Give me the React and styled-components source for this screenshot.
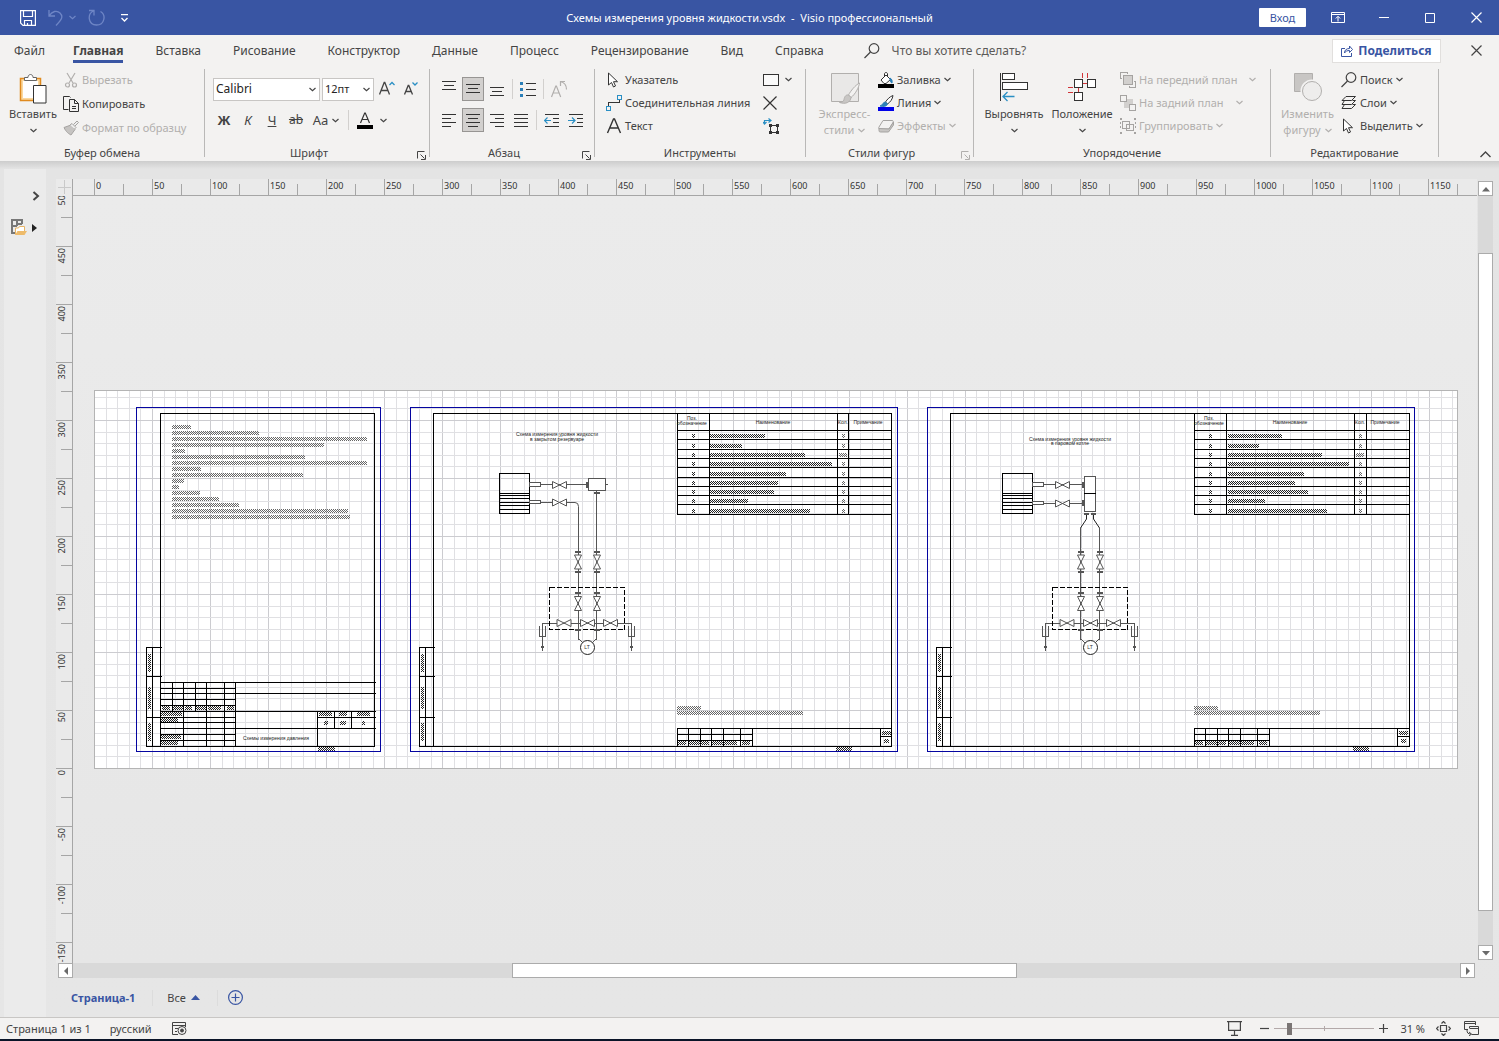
import React from "react";
import styled, { createGlobalStyle, css } from "styled-components";

const BLUE = "#3955a3";
const INK = "#444444";
const MUTED = "#b1afad";
const FONT = '"Noto Sans", "Open Sans", sans-serif';

const Global = createGlobalStyle`
  *, *::before, *::after { box-sizing: border-box; }
  body { margin: 0; background: #e6e6e6; }
  button, input, select { font: inherit; color: inherit; }
  button { background: none; border: 0; padding: 0; margin: 0; }
  svg { display: block; flex: none; }
`;

/* ---------- shell ---------- */

const Shell = styled.div`
  display: flex;
  flex-direction: column;
  height: 100vh;
  min-height: 600px;
  overflow: hidden;
  font: 11px/16px ${FONT};
  color: ${INK};
`;

const TitleBar = styled.header`
  display: grid;
  grid-template-columns: 1fr auto 1fr;
  align-items: center;
  flex: none;
  height: 35px;
  background: ${BLUE};
  color: #fff;
`;

const QuickAccess = styled.div`
  display: flex;
  align-items: center;
  gap: 12px;
  padding-left: 20px;
`;

const QuickButton = styled.button`
  display: flex;
  align-items: center;
  gap: 6px;
  margin-right: ${(p) => p.$after || 0}px;
  color: ${(p) => (p.$faded ? "#6f86c6" : "#fff")};
`;

const DocTitle = styled.h1`
  margin: 0;
  font: 11px/16px ${FONT};
  white-space: pre;
`;

const WindowControls = styled.div`
  display: flex;
  align-items: center;
  justify-content: flex-end;
  align-self: stretch;
`;

const SignIn = styled.button`
  width: 47px;
  height: 19px;
  margin-right: 9px;
  border-radius: 1px;
  background: #fff;
  color: ${BLUE};
`;

const WindowButton = styled.button`
  display: flex;
  align-items: center;
  justify-content: center;
  width: 46px;
  height: 34px;
`;

/* ---------- ribbon ---------- */

const TabRow = styled.nav`
  display: flex;
  align-items: center;
  flex: none;
  gap: 32px;
  height: 31px;
  padding-left: 14px;
  background: #f3f2f1;
  font-size: 12px;
`;

const Tab = styled.a`
  align-self: flex-start;
  height: 28px;
  padding-top: 7px;
  line-height: 18px;
  color: ${INK};
  text-decoration: none;
  &:first-child { margin-right: -4px; }
  ${(p) =>
    p.$active &&
    css`
      font-weight: 700;
      border-bottom: 3px solid ${BLUE};
    `}
`;

const TellMe = styled.label`
  display: flex;
  align-items: center;
  flex: 1;
  gap: 12px;
  margin-left: 8px;
`;

const TellMeInput = styled.input`
  width: 180px;
  padding: 0;
  border: 0;
  background: none;
  outline: 0;
  &::placeholder { color: #5c5a58; opacity: 1; }
`;

const ShareButton = styled.button`
  display: flex;
  align-items: center;
  justify-content: center;
  gap: 5px;
  width: 109px;
  height: 24px;
  border: 1px solid #e1dfdd;
  background: #fff;
  color: ${BLUE};
  font-weight: 700;
`;

const CloseDocument = styled.button`
  display: flex;
  justify-content: center;
  width: 46px;
`;

const TabActions = styled.div`
  display: flex;
  align-items: center;
  gap: 12px;
`;

const Ribbon = styled.section`
  display: flex;
  flex: none;
  height: 95px;
  background: #f3f2f1;
`;

const Separator = styled.div`
  flex: none;
  width: 1px;
  height: ${(p) => p.$h || 88}px;
  margin: ${(p) => p.$m || "3px 0"};
  background: ${(p) => (p.$h ? "#d2d0ce" : "#b9b8b7")};
`;

const GroupBox = styled.div`
  display: flex;
  flex-direction: column;
  flex: none;
  width: ${(p) => p.$w}px;
`;

const GroupBody = styled.div`
  display: flex;
  flex: 1;
  padding-left: ${(p) => p.$pad || 0}px;
`;

const GroupFooter = styled.div`
  display: flex;
  height: 16px;
`;

const GroupLabel = styled.span`
  flex: 1;
  text-align: center;
`;

const Launcher = styled.button`
  flex: none;
  width: 16px;
  padding: 4px 0 0 4px;
  color: ${(p) => (p.$muted ? MUTED : INK)};
`;

const BigButton = styled.button`
  display: flex;
  flex-direction: column;
  align-items: center;
  flex: none;
  width: ${(p) => p.$w}px;
  height: 79px;
  padding-top: 7px;
  white-space: nowrap;
  color: ${(p) => (p.$muted ? MUTED : INK)};
`;

const BigIcon = styled.span`
  height: 33px;
`;

const SecondLine = styled.span`
  display: flex;
  align-items: center;
  justify-content: center;
  gap: 4px;
  height: 16px;
`;

const List = styled.div`
  display: flex;
  flex-direction: column;
  padding-top: 2px;
  margin-left: ${(p) => p.$ml || 0}px;
`;

const ListButton = styled.button`
  display: flex;
  align-items: center;
  gap: 3px;
  height: ${(p) => p.$h || 23}px;
  white-space: nowrap;
  color: ${(p) => (p.$muted ? MUTED : INK)};
`;

const ChevronGap = styled.span`
  margin-left: ${(p) => p.$ml || 0}px;
`;

const ToolRows = styled.div`
  display: flex;
  flex-direction: column;
  gap: 7px;
  padding-top: 11px;
`;

const ToolRow = styled.div`
  display: flex;
  align-items: center;
  height: 24px;
`;

const IconButton = styled.button`
  display: flex;
  align-items: center;
  justify-content: center;
  gap: 4px;
  width: ${(p) => p.$w || 22}px;
  height: 24px;
  margin: 0 1px;
  border: 1px solid ${(p) => (p.$on ? "#979593" : "transparent")};
  background: ${(p) => (p.$on ? "#d2d0ce" : "none")};
  font-size: ${(p) => p.$size || 13}px;
  color: ${(p) => (p.$muted ? MUTED : INK)};
`;

const SelectFrame = styled.label`
  display: flex;
  align-items: center;
  width: ${(p) => p.$w}px;
  height: 23px;
  margin-right: 1px;
  margin-left: 1px;
  padding-right: 3px;
  border: 1px solid #c8c6c4;
  background: #fff;
`;

const Select = styled.select`
  flex: 1;
  min-width: 0;
  padding: 0 0 0 2px;
  border: 0;
  background: none;
  appearance: none;
  outline: 0;
  font-size: ${(p) => p.$size || 12}px;
  color: #252423;
`;

const Spacer = styled.div`
  flex: 1;
`;

const CollapseButton = styled.button`
  align-self: flex-end;
  margin: 0 8px 3px 0;
`;

/* ---------- workspace ---------- */

const Workspace = styled.main`
  display: flex;
  flex: 1;
  min-height: 0;
  padding-left: 4px;
  background: linear-gradient(#cdcdcd, #e4e4e4 8px, #e6e6e6);
`;

const ShapesPane = styled.aside`
  display: flex;
  flex-direction: column;
  flex: none;
  gap: 18px;
  width: 42px;
  margin: 8px 10px 0 0;
  padding: 22px 6px 0 7px;
  background: #ebebeb;
`;

const PaneButton = styled.button`
  display: flex;
  align-items: center;
  justify-content: ${(p) => (p.$end ? "flex-end" : "space-between")};
  padding-right: ${(p) => (p.$end ? 0 : 3)}px;
`;

const Editor = styled.div`
  display: flex;
  flex-direction: column;
  flex: 1;
  min-width: 0;
`;

const EditorTop = styled.div`
  display: flex;
  flex: 1;
  min-height: 0;
  padding-top: 18px;
`;

const Sheet = styled.div`
  display: grid;
  grid-template-columns: 17px 1fr;
  grid-template-rows: 17px 1fr;
  flex: 1;
  min-width: 0;
  background: #eaeaea;
`;

const Corner = styled.div`
  border-right: 1px solid #a6a6a6;
`;

const HRuler = styled.div`
  display: flex;
  padding-left: 21px;
  border-bottom: 1px solid #a6a6a6;
  overflow: hidden;
  font-size: 9px;
  line-height: 13px;
  color: #333;
`;

const HMark = styled.div`
  display: flex;
  align-items: flex-end;
  flex: none;
  width: 58px;
  border-left: 1px solid #a6a6a6;
  &::after {
    content: "";
    width: 1px;
    height: 11px;
    background: #a6a6a6;
  }
`;

const HLabel = styled.span`
  align-self: flex-start;
  width: 28px;
  padding-left: 1px;
`;

const VRuler = styled.div`
  display: flex;
  flex-direction: column;
  min-height: 0;
  border-right: 1px solid #a6a6a6;
  overflow: hidden;
  font-size: 9px;
  line-height: 11px;
  color: #333;
`;

const VCell = styled.div`
  display: flex;
  flex-direction: column;
  justify-content: flex-end;
  flex: none;
  height: ${(p) => p.$h}px;
  overflow: hidden;
`;

const VMark = styled.div`
  display: flex;
  flex-direction: column;
  align-items: flex-end;
  flex: none;
  height: 58px;
  border-top: 1px solid #a6a6a6;
  &::after {
    content: "";
    width: 11px;
    height: 1px;
    background: #a6a6a6;
  }
`;

const VLabelBox = styled.span`
  display: flex;
  align-items: flex-start;
  align-self: flex-start;
  height: 28px;
  padding-top: 1px;
`;

const VLabel = styled.span`
  writing-mode: vertical-rl;
  transform: rotate(180deg);
`;

const Canvas = styled.div`
  display: flex;
  align-items: center;
  justify-content: center;
  min-width: 0;
  min-height: 0;
  padding-left: 2px;
  overflow: hidden;
  background: linear-gradient(#ebebeb, #e6e6e6);
`;

const VScroll = styled.div`
  display: flex;
  flex-direction: column;
  flex: none;
  width: 15px;
  margin: 2px 6px 3px 1px;
`;

const HScroll = styled.div`
  display: flex;
  flex: none;
  height: 15px;
  margin: 0 24px 0 2px;
`;

const ScrollButton = styled.button`
  display: flex;
  align-items: center;
  justify-content: center;
  flex: none;
  width: 15px;
  height: 15px;
  border: 1px solid #ababab;
  background: #fff;
  color: #6a6a6a;
`;

const Track = styled.div`
  display: flex;
  flex-direction: ${(p) => (p.$vertical ? "column" : "row")};
  flex: 1;
  background: #d9d9d9;
`;

const Before = styled.div`
  flex: ${(p) => p.$part} 0 0;
`;

const Thumb = styled.div`
  flex: ${(p) => p.$part} 0 0;
  border: 1px solid #ababab;
  background: #fff;
`;

const PageTabs = styled.div`
  display: flex;
  align-items: center;
  flex: none;
  height: 39px;
  padding-left: 15px;
`;

const PageTab = styled.button`
  display: flex;
  align-items: center;
  gap: 5px;
  ${(p) =>
    p.$active &&
    css`
      font-weight: 700;
      color: ${BLUE};
    `}
`;

const Divider = styled.div`
  width: 1px;
  height: 16px;
  margin: ${(p) => p.$m};
  background: #dcdcdc;
`;

/* ---------- status bar ---------- */

const StatusBar = styled.footer`
  display: flex;
  align-items: center;
  flex: none;
  height: 24px;
  padding: 0 20px 0 6px;
  border-top: 1px solid #c8c6c4;
  border-bottom: 2px solid #0a1428;
  background: #f3f2f1;
`;

const StatusButton = styled.button`
  margin-right: ${(p) => p.$after || 0}px;
`;

const Zoom = styled.input`
  width: 100px;
  height: 12px;
  margin: 0 5px;
  appearance: none;
  background:
    linear-gradient(#b3a9a9, #b3a9a9) center / 100% 1px no-repeat,
    linear-gradient(#b3a9a9, #b3a9a9) center / 1px 5px no-repeat;
  &::-webkit-slider-thumb {
    appearance: none;
    width: 5px;
    height: 12px;
    background: #7a7574;
  }
`;

/* ---------- icons ---------- */

const Svg = ({ w = 16, h = w, children, ...rest }) => (
  <svg width={w} height={h} viewBox={`0 0 ${w} ${h}`} fill="none" stroke="currentColor" aria-hidden="true" {...rest}>
    {children}
  </svg>
);

const Chevron = () => (
  <Svg w={7} h={5} strokeWidth="1.2">
    <path d="M.5 1l3 2.600 3-2.600" />
  </Svg>
);

const Lines = ({ rows }) => (
  <Svg w={16} h={16} shapeRendering="crispEdges" stroke="#333">
    {rows.map(([y, a, b]) => (
      <path key={y} d={`M${a} ${y + 0.5}H${b}`} />
    ))}
  </Svg>
);

const PasteIcon = () => (
  <Svg w={28} h={31}>
    <path d="M1.500 5.500h20v22h-20z" stroke="#e08a1e" strokeWidth="1.500" fill="#fbd9a0" />
    <path d="M4 8h15v17H4z" fill="#fff" stroke="none" />
    <path d="M5.500 7.500v-3h3.500c0-4 5-4 5 0h3.500v3z" fill="#fff" stroke="#666" />
    <path d="M14.500 12.500h12.500v17.500h-12.500z" fill="#fff" stroke="#333" />
  </Svg>
);
const CutIcon = () => (
  <Svg stroke="#b1afad" strokeWidth="1.200">
    <path d="M4 1l6 10M12 1L6 11" />
    <circle cx="4.500" cy="13" r="2" />
    <circle cx="11.500" cy="13" r="2" />
  </Svg>
);
const CopyIcon = () => (
  <Svg stroke="#333">
    <path d="M5.500 13.500h-5v-13h6l1 1" />
    <path d="M6.500 3.500h5l4 4v8h-9zM11.500 3.500v4h4M9 10.500h4M9 12.500h4" />
  </Svg>
);
const BrushIcon = () => (
  <Svg stroke="#a5a3a1">
    <path d="M1 7.500l7-2.500 4 4.500L8 15c-2-1-5-3-7-7.500z" fill="#c6c4c2" />
    <path d="M7 5l2-1.500 4 4L11.500 9M10.500 4.500L14 1l1.500 1.500L12 6" fill="#eee" />
  </Svg>
);
const PointerIcon = () => (
  <Svg stroke="#333">
    <path d="M2.500 1v12l3-2.500 2 4.500 2-1-2-4.300h4z" fill="#fff" />
  </Svg>
);
const ConnectorIcon = () => (
  <Svg stroke="#2a8fc4" shapeRendering="crispEdges">
    <path d="M2.500 11V7.500h11V5" stroke="#333" />
    <path d="M.5 11.500h4v4h-4zM11.500.5h4v4h-4z" />
  </Svg>
);
const TextIcon = () => (
  <Svg stroke="#333" strokeWidth="1.400">
    <path d="M1.500 15L7.500 1h1l6 14M4 10h8" />
  </Svg>
);
const RectIcon = () => (
  <Svg w={16} h={12} stroke="#333" shapeRendering="crispEdges">
    <path d="M.5.5h15v11H.5z" fill="#fafafa" />
  </Svg>
);
const XIcon = ({ s = 11, stroke }) => (
  <Svg w={s} stroke={stroke || "currentColor"} strokeWidth="1.200">
    <path d={`M.5.5l${s - 1} ${s - 1}M${s - 0.5}.5l-${s - 1} ${s - 1}`} />
  </Svg>
);
const ConnectionPointIcon = () => (
  <Svg stroke="#333">
    <path d="M7.500 7.500h7v7h-7z" />
    <path d="M6 6h3v3H6zM13 6h3v3h-3zM6 13h3v3H6zM13 13h3v3h-3z" fill="#333" stroke="none" />
    <path d="M1.500 6V2.500H8M5.500.5l2.500 2-2.500 2M0 4l1.500 2L3.500 4" stroke="#2a8fc4" strokeWidth="1.200" />
  </Svg>
);
const QuickStylesIcon = () => (
  <Svg w={30} h={31} stroke="#b1afad">
    <path d="M1.500.5h27v28h-27z" fill="#e9e8e7" />
    <path d="M29.500 10c-4 2-9 8-11 12l2.500 2.500c4-3 8-10 8.500-14.500z" fill="#f3f2f1" />
    <path d="M18.500 22c-3-.5-4 2-4.500 4.500-.5 2-2 3-4.500 3 6 2 11 0 11.500-5z" fill="#c8c6c4" />
  </Svg>
);
const FillIcon = () => (
  <Svg stroke="#333">
    <path d="M3 8l5-5 4.500 4.500L8 11.500H6zM6.500 4.500V2c0-2 3-2 3 0v2" fill="#fff" />
    <path d="M12 6c2 1 2.500 3 2 5-1.500-.5-2-2-2-5z" fill="#2a7fb8" stroke="#2a7fb8" />
    <path d="M0 12h16v4H0z" fill="#000" stroke="none" />
  </Svg>
);
const LineIcon = () => (
  <Svg stroke="#333">
    <path d="M15 .5c-3 1-6 4-7.500 6.500l2 2c3-2 5-5 5.500-8.500z" fill="#fff" />
    <path d="M7.500 7c-3 0-2 3-5.500 4 3 1 7 .5 7.500-2z" fill="#2a7fb8" stroke="#2a7fb8" />
    <path d="M0 12h16v4H0z" fill="#0000e8" stroke="none" />
  </Svg>
);
const EffectsIcon = () => (
  <Svg stroke="#a5a3a1">
    <path d="M5 2.500h9c1.500 0 1.500 1 1 2L11 11H1.500C.5 11 .5 10 1 9z" fill="#f3f2f1" />
    <path d="M1 10.500v2c0 1 .5 1.500 1.500 1.500h8l5-7V4L11 11z" fill="#c8c6c4" />
  </Svg>
);
const AlignIcon = () => (
  <Svg w={28} h={30} stroke="#333" shapeRendering="crispEdges">
    <path d="M.5 0v28" />
    <path d="M2.500.5h12v6h-12zM2.500 9.500h25v7h-25z" fill="#fff" />
    <path d="M2.500 23.500h12M7.500 19L3 23.500 7.500 28" stroke="#2a8fc4" strokeWidth="1.300" shapeRendering="auto" />
  </Svg>
);
const PositionIcon = () => (
  <Svg w={28} h={30} stroke="#333" shapeRendering="crispEdges">
    <path d="M6.500 6.500h8v8h-8zM19.500 6.500h8v8h-8zM6.500 19.500h8v8h-8z" fill="#fff" />
    <path d="M14.500 0v5M19.500 0v5M15 10.500h4M0 14.500h5M0 19.500h5M10.500 15v4" stroke="#d13438" />
  </Svg>
);
const FrontIcon = () => (
  <Svg stroke="#a5a3a1" shapeRendering="crispEdges">
    <path d="M3.500 3.500h9v9h-9z" fill="#d2d0ce" />
    <path d="M2 6.500H.5V.5H7V2M14 9.500h1.500v6H9V14" />
  </Svg>
);
const BackIcon = () => (
  <Svg stroke="#a5a3a1" shapeRendering="crispEdges">
    <path d="M4 4h9v9H4z" fill="#d2d0ce" stroke="none" />
    <path d="M.5.5h6v6h-6zM9.500 9.500h6v6h-6z" fill="#f3f2f1" />
  </Svg>
);
const GroupIcon = () => (
  <Svg stroke="#a5a3a1" shapeRendering="crispEdges">
    <path d="M2.500 3.500h7v7h-7zM6.500 6.500h7v6h-7z" />
    <path d="M0 0h2v2H0zM14 0h2v2h-2zM0 14h2v2H0zM14 14h2v2h-2z" fill="#a5a3a1" stroke="none" />
    <path d="M.5 4v8M15.500 4v8" strokeDasharray="2 2" />
  </Svg>
);
const ChangeShapeIcon = () => (
  <Svg w={28} h={30} stroke="#b1afad">
    <path d="M.5.5h18v18H.5z" fill="#c8c6c4" />
    <circle cx="18" cy="18" r="9.500" fill="#eeedec" stroke="#f3f2f1" strokeWidth="4" />
    <circle cx="18" cy="18" r="9.500" fill="#eeedec" />
  </Svg>
);
const SearchIcon = () => (
  <Svg stroke="#444" strokeWidth="1.200">
    <circle cx="10" cy="5.500" r="4.800" />
    <path d="M6.500 9L.5 15" />
  </Svg>
);
const LayersIcon = () => (
  <Svg stroke="#333">
    <path d="M5 1.500h9.500l-4 4H1zM3.500 5.500L1 9.500h9.500l4-4h-3M3.500 9.500L1 13.500h9.500l4-4h-3" />
  </Svg>
);
const LauncherIcon = () => (
  <Svg w={9} h={9}>
    <path d="M.5 7.500v-7h7M3.500 3.500l4 4M8.500 4v4.500H4" />
  </Svg>
);
const SaveIcon = () => (
  <Svg stroke="#fff" strokeWidth="1.200">
    <path d="M.6.6h14.800v14.800H3L.6 13zM3.500 1v5.500h9V1M4.500 15v-4.500h7V15M7.500 13v2" />
  </Svg>
);
const UndoIcon = () => (
  <Svg w={15} h={17} strokeWidth="1.300">
    <path d="M1 1v6h6M1 7C4 2 9 1 12 4c4 4 1 7-4 12.500" />
  </Svg>
);
const RedoIcon = () => (
  <Svg w={17} h={17} strokeWidth="1.300">
    <path d="M1 1.500h5v5M5.500 2C-1 5 0 16 8.500 16c8 0 10-10 4-13.500" />
  </Svg>
);
const FontColorIcon = () => (
  <Svg w={16} h={17} stroke="#333">
    <path d="M3.500 11L7.700 1h.6l4.200 10M5 7.500h6" strokeWidth="1.200" />
    <path d="M0 13h16v4H0z" fill="#000" stroke="none" />
  </Svg>
);
const GrowIcon = ({ down }) => (
  <Svg w={16} h={16} stroke="#444" strokeWidth="1.300">
    <path d={down ? "M1.500 13.500L5.200 4.500h.6l3.700 9M3 10.500h5" : "M.5 13.500L5.200 1.500h.6L10.500 13.500M2.200 9.500h6.600"} />
    <path d={down ? "M9.500 1.500l2.500 2.500 2.500-2.500" : "M10.500 4L13 1.500 15.500 4"} stroke="#2a8fc4" />
  </Svg>
);
const BulletIcon = () => (
  <Svg shapeRendering="crispEdges" stroke="#333">
    <path d="M6 2.500h10M6 8.500h10M6 14.500h10" />
    <path d="M0 1h3v3H0zM0 7h3v3H0zM0 13h3v3H0z" fill="#2a7fb8" stroke="none" />
  </Svg>
);
const RotateTextIcon = () => (
  <Svg w={18} h={18} stroke="#b1afad" strokeWidth="1.200">
    <path d="M1.500 17L5.800 6h.6l4.300 11M3 13h6" />
    <path d="M10.500 6V1.500H15M10.500 1.500c4 1 6 4 6 8" />
  </Svg>
);
const IndentIcon = ({ out }) => (
  <Svg shapeRendering="crispEdges" stroke="#333">
    <path d="M1 2.500h14M9 6.500h6M9 10.500h6M1 14.500h14" />
    <path d={out ? "M.5 8.500h6.500M3.500 5.500l-3 3 3 3" : "M0 8.500h6.500M4 5.500l3 3-3 3"} stroke="#2a8fc4" strokeWidth="1.200" shapeRendering="auto" />
  </Svg>
);
const Triangle = ({ dir }) => (
  <Svg w={8} h={8} stroke="none" fill="currentColor">
    <path d={{ up: "M0 6.500L4 2l4 4.500z", down: "M0 2l4 4.500L8 2z", left: "M6 0L2 4l4 4z", right: "M2 0l4 4-4 4z" }[dir]} />
  </Svg>
);

/* ---------- schematic ---------- */

const DrawingSvg = styled.svg`
  font-family: "Liberation Sans", Arial, sans-serif;
  font-size: 5px;
  text-anchor: middle;
`;

const PAGE = { x: 94, y: 390, w: 1364, h: 379 };
const PAGE_EDGE = "#0505a0";

const V = ({ x, a, b }) => <path d={`M${x + 0.5} ${a}V${b}`} />;
const H = ({ y, a, b }) => <path d={`M${a} ${y + 0.5}H${b}`} />;
const Bar = ({ x, x2, y, h = 4, soft }) => (
  <rect x={x} y={y} width={x2 - x} height={h} fill={soft ? "url(#soft)" : "url(#dense)"} stroke="none" />
);
const Words = ({ x, y, children }) => (
  <text x={x} y={y} fill="#222" stroke="none">{children}</text>
);

const Grid = () => {
  const lines = [];
  for (let i = 1; i * 11.61 < PAGE.w - 1; i++) {
    const x = Math.round(PAGE.x + i * 11.61) + 0.5;
    lines.push(<path key={`v${i}`} d={`M${x} 391V768`} stroke={i % 5 ? "#e0e0e3" : "#ccccd0"} />);
  }
  for (let i = 1; i * 11.6 < PAGE.h - 1; i++) {
    const y = Math.round(768 - i * 11.6) + 0.5;
    lines.push(<path key={`h${i}`} d={`M95 ${y}H1457`} stroke={i % 5 ? "#e0e0e3" : "#ccccd0"} />);
  }
  return <g>{lines}</g>;
};

const Margin = ({ x, to }) => (
  <g>
    <V x={x} a={647} b={747} />
    <V x={x + 6} a={647} b={747} />
    {[647, 676, 717, 746].map((y) => <H key={y} y={y} a={x} b={to} />)}
    <Bar x={x + 2} x2={x + 5} y={654} h={18} />
    <Bar x={x + 2} x2={x + 5} y={687} h={22} />
    <Bar x={x + 2} x2={x + 5} y={723} h={18} />
  </g>
);

const NOTE_ENDS = [191, 259, 367, 324, 185, 305, 367, 201, 303, 184, 179, 200, 219, 239, 348, 350];

const CoverSheet = () => (
  <g stroke="#000">
    <path d="M136.500 407.500h244v344h-244z" stroke={PAGE_EDGE} />
    <path d="M160.500 413.500h214v333h-214z" />
    {NOTE_ENDS.map((end, i) => <Bar key={i} x={172} x2={end} y={425 + i * 6} soft />)}
    <Margin x={146} to={162} />
    <H y={682} a={160} b={376} />
    <H y={693} a={160} b={376} />
    <H y={711} a={160} b={376} />
    {[688, 699, 705, 717, 722, 728, 734, 740].map((y) => <H key={y} y={y} a={160} b={236} />)}
    {[172, 195].map((x) => <V key={x} x={x} a={682} b={711} />)}
    {[183, 206, 224, 235].map((x) => <V key={x} x={x} a={682} b={747} />)}
    <H y={728} a={235} b={376} />
    <H y={717} a={317} b={376} />
    <V x={317} a={711} b={747} />
    <V x={334} a={711} b={728} />
    <V x={351} a={711} b={728} />
    {[[162, 170], [173, 183], [185, 192], [196, 206], [208, 221], [227, 234]].map(([a, b]) => (
      <Bar key={a} x={a} x2={b} y={706} />
    ))}
    <Bar x={161} x2={182} y={712} />
    <Bar x={161} x2={178} y={718} />
    <Bar x={161} x2={181} y={735} />
    <Bar x={161} x2={178} y={741} />
    <Bar x={319} x2={332} y={712} />
    <Bar x={339} x2={347} y={712} />
    <Bar x={357} x2={370} y={712} />
    <Bar x={324} x2={328} y={721} />
    <Bar x={340} x2={346} y={721} />
    <Bar x={362} x2={365} y={721} />
    <Bar x={318} x2={335} y={747} />
    <Words x={276} y={740}>Схемы измерения давления</Words>
  </g>
);

const ROWS = [430, 439, 449, 458, 467, 477, 486, 495, 504, 514];

const WideSheet = ({ dx, right, qty, ends, barX }) => (
  <g stroke="#000">
    <path d={`M${410.5 + dx} 407.500h487v344h-487z`} stroke={PAGE_EDGE} />
    <path d={`M${433.5 + dx} 413.500H${right + 0.5}V746.500H${433.5 + dx}z`} />
    <Margin x={419 + dx} to={435 + dx} />
    {ROWS.map((y) => <H key={y} y={y} a={677 + dx} b={right} />)}
    {[677 + dx, 709 + dx, 837 + dx, qty].map((x) => <V key={x} x={x} a={413} b={515} />)}
    <Words x={692 + dx} y={420}>Поз.</Words>
    <Words x={692 + dx} y={425}>обозначение</Words>
    <Words x={773 + dx} y={424}>Наименование</Words>
    <Words x={843 + dx} y={424}>Кол.</Words>
    <Words x={868 + dx} y={424}>Примечание</Words>
    {ends.map((end, i) => {
      const y = ROWS[i + 1] - 5;
      return (
        <g key={i}>
          <Bar x={692 + dx} x2={695 + dx} y={y} />
          <Bar x={barX} x2={end} y={y} />
          <Bar x={(i === 2 ? 839 : 842) + dx} x2={(i === 2 ? 847 : 845) + dx} y={y} soft />
        </g>
      );
    })}
    <Bar x={677 + dx} x2={701 + dx} y={706} soft />
    <Bar x={677 + dx} x2={803 + dx} y={711} soft />
    <H y={728} a={677 + dx} b={right} />
    <H y={734} a={677 + dx} b={753 + dx} />
    <H y={740} a={677 + dx} b={753 + dx} />
    {[677, 688, 700, 711, 723, 740, 752].map((x) => <V key={x} x={x + dx} a={728} b={747} />)}
    <V x={880 + dx} a={728} b={747} />
    <H y={736} a={880 + dx} b={right} />
    {[[678, 686], [689, 709], [712, 737], [742, 750]].map(([a, b]) => (
      <Bar key={a} x={a + dx} x2={b + dx} y={741} />
    ))}
    <Bar x={882 + dx} x2={891 + dx} y={731} />
    <Bar x={884 + dx} x2={889 + dx} y={739} />
    <Bar x={836 + dx} x2={852 + dx} y={747} />
  </g>
);

const HValve = ({ x, y }) => (
  <path d={`M${x - 7} ${y - 3.5}v7l14-7v7z`} fill="#fff" shapeRendering="auto" />
);
const VValve = ({ x, y }) => (
  <path d={`M${x - 3.5} ${y - 7}h7l-7 14h7z`} fill="#fff" shapeRendering="auto" />
);
const Flange = ({ x, y }) => <path d={`M${x - 3} ${y}h6`} strokeWidth="2" />;

/* Tank, impulse lines, valve manifold and level transmitter. */
const Plant = ({ lowNozzle, left }) => (
  <g stroke="#555">
    <path d="M499.500 473.500h30v40h-30z" stroke="#000" />
    {[493, 495, 498, 502, 505, 509].map((y) => (
      <path key={y} d={`M499 ${y + 0.5}h31`} stroke="#000" />
    ))}
    <path d="M529.500 482.500h11v4h-11z" fill="#fff" />
    <path d={`M529.500 ${lowNozzle - 1.5}h11v3h-11z`} fill="#fff" />
    <path d={`M541 484.500h45M541 ${lowNozzle + 0.5}h${left === 578 ? 34 : 38}`} />
    <HValve x={559.5} y={485} />
    <HValve x={559.5} y={lowNozzle + 0.5} />
    <path d={`M${left + 0.5} 549V639l5 4M596.500 549V639l-5 4`} />
    {[578, 597].map((x) => (
      <g key={x}>
        <Flange x={x} y={552} />
        <VValve x={x} y={562} />
        <Flange x={x} y={572} />
        <Flange x={x} y={593} />
        <VValve x={x} y={603.5} />
      </g>
    ))}
    <path d="M542.500 636V623.500H631.500V636" />
    <HValve x={564} y={623} />
    <HValve x={587.5} y={623} />
    <HValve x={610.5} y={623} />
    <path d="M549.500 587.500h75v42h-75z" stroke="#000" strokeDasharray="5 2" />
    <Flange x={578} y={630} />
    <Flange x={597} y={630} />
    {[542, 631].map((x) => (
      <g key={x}>
        <path d={`M${x - 2.5} 626V636.500h6V626M${x + 0.5} 636V651`} />
        <path d={`M${x - 1} 646h3l-1.500 5z`} fill="#555" stroke="none" />
      </g>
    ))}
    <circle cx="587.500" cy="647.500" r="7" stroke="#222" fill="#fff" shapeRendering="auto" />
    <text x="587" y="649" fill="#333" stroke="none">LT</text>
  </g>
);

const Drawing = () => (
  <DrawingSvg
    width={PAGE.w}
    height={PAGE.h}
    viewBox={`${PAGE.x} ${PAGE.y} ${PAGE.w} ${PAGE.h}`}
    fill="none"
    shapeRendering="crispEdges"
    role="img"
    aria-label="Схемы измерения уровня жидкости"
  >
    <defs>
      <pattern id="dense" width="2" height="2" patternUnits="userSpaceOnUse">
        <path d="M0 0h1v1H0zM1 1h1v1H1z" fill="#222" stroke="none" />
      </pattern>
      <pattern id="soft" width="2" height="2" patternUnits="userSpaceOnUse">
        <path d="M0 0h1v1H0zM1 1h1v1H1z" fill="#666" stroke="none" />
      </pattern>
    </defs>
    <rect x="94.500" y="390.500" width="1363" height="378" fill="#fff" stroke="#b4b4b4" />
    <Grid />
    <CoverSheet />
    <WideSheet dx={0} right={891} qty={848} barX={710} ends={[765, 742, 805, 832, 786, 778, 774, 748, 810]} />
    <WideSheet dx={517} right={1409} qty={1366} barX={1228} ends={[1282, 1259, 1322, 1349, 1304, 1295, 1308, 1265, 1327]} />
    <Words x={557} y={436}>Схема измерения уровня жидкости</Words>
    <Words x={557} y={441}>в закрытом резервуаре</Words>
    <Words x={1070} y={441}>Схема измерения уровня жидкости</Words>
    <Words x={1070} y={445}>в паровом котле</Words>
    <Plant lowNozzle={502} left={578} />
    <g stroke="#555">
      <path d="M575 502.500q3.500 0 3.500 4V550M596.500 491V550" shapeRendering="auto" />
      <rect x="588.500" y="478.500" width="17" height="12" rx="1" fill="#fff" />
      <path d="M605 484.500h3" />
      <path d="M587 482v6" strokeWidth="2" />
      <Flange x={597} y={493} />
    </g>
    <g transform="translate(503 0)">
      <Plant lowNozzle={503} left={577} />
    </g>
    <g stroke="#555">
      <path d="M1080.500 550V528M1099.500 550V528" />
      <path d="M1080.500 528l6-9v-5M1099.500 528l-6-9v-5" stroke="#222" shapeRendering="auto" />
      <rect x="1084.500" y="476.500" width="11" height="35" rx="1" fill="#fff" />
      <path d="M1084 493.500h12" stroke="#000" />
      <path d="M1083 482v6M1083 500v6M1084 514h5M1091 514h5" strokeWidth="2" />
    </g>
  </DrawingSvg>
);

/* ---------- ribbon pieces ---------- */

const Group = ({ w, label, pad, launcher, children }) => (
  <>
    <GroupBox $w={w}>
      <GroupBody $pad={pad}>{children}</GroupBody>
      <GroupFooter>
        <GroupLabel>{label}</GroupLabel>
        {launcher && (
          <Launcher $muted={launcher === "muted"} aria-label={`${label}: параметры`}>
            <LauncherIcon />
          </Launcher>
        )}
      </GroupFooter>
    </GroupBox>
    <Separator />
  </>
);

const Item = ({ icon, label, menu, gap, ...rest }) => (
  <ListButton {...rest}>
    {icon}
    {label}
    {menu && <ChevronGap $ml={gap}><Chevron /></ChevronGap>}
  </ListButton>
);

const TABS = ["Файл", "Главная", "Вставка", "Рисование", "Конструктор", "Данные", "Процесс", "Рецензирование", "Вид", "Справка"];
const H_MARKS = Array.from({ length: 24 }, (_, i) => i * 50);
const V_MARKS = Array.from({ length: 14 }, (_, i) => 500 - i * 50);

const inset = { long: [1, 15], short: [3, 13], left: [1, 10], right: [6, 15] };
const four = (kind) => [[2, ...inset.long], [6, ...inset[kind]], [10, ...inset.long], [14, ...inset[kind]]];

export default function App() {
  return (
    <Shell>
      <Global />
      <TitleBar>
        <QuickAccess>
          <QuickButton aria-label="Сохранить"><SaveIcon /></QuickButton>
          <QuickButton $faded aria-label="Отменить"><UndoIcon /><Chevron /></QuickButton>
          <QuickButton $faded $after={4} aria-label="Повторить"><RedoIcon /></QuickButton>
          <QuickButton aria-label="Настройка панели">
            <Svg w={7} h={8} strokeWidth="1.300"><path d="M0 .7h7M.5 4l3 3 3-3" /></Svg>
          </QuickButton>
        </QuickAccess>
        <DocTitle>{"Схемы измерения уровня жидкости.vsdx  -  Visio профессиональный"}</DocTitle>
        <WindowControls>
          <SignIn>Вход</SignIn>
          <WindowButton aria-label="Параметры ленты">
            <Svg w={14} h={11}><path d="M.5.5h13v10H.5zM.5 2.500h13M7 9.500V4.500M4.800 6.500L7 4.300l2.200 2.200" /></Svg>
          </WindowButton>
          <WindowButton aria-label="Свернуть"><Svg w={10} h={10}><path d="M0 4.500h10" /></Svg></WindowButton>
          <WindowButton aria-label="Развернуть"><Svg w={10} h={10}><path d="M.5.500h9v9h-9z" /></Svg></WindowButton>
          <WindowButton aria-label="Закрыть"><XIcon s={11} /></WindowButton>
        </WindowControls>
      </TitleBar>

      <TabRow>
        {TABS.map((name) => (
          <Tab key={name} href="#" $active={name === "Главная"}>{name}</Tab>
        ))}
        <TellMe>
          <SearchIcon />
          <TellMeInput placeholder="Что вы хотите сделать?" aria-label="Что вы хотите сделать?" />
        </TellMe>
        <TabActions>
          <ShareButton>
            <Svg w={12} h={12}><path d="M4 3.500H.5v8h10V8M3.500 8c0-3 2-4.500 5-4.500V1l3 3.500-3 3V5.500c-2 0-4 .5-5 2.500z" /></Svg>
            Поделиться
          </ShareButton>
          <CloseDocument aria-label="Закрыть документ"><XIcon s={11} /></CloseDocument>
        </TabActions>
      </TabRow>

      <Ribbon>
        <Group w={204} label="Буфер обмена">
          <BigButton $w={66}>
            <BigIcon><PasteIcon /></BigIcon>
            Вставить
            <SecondLine><Chevron /></SecondLine>
          </BigButton>
          <List $ml={-3}>
            <Item $h={24} $muted icon={<CutIcon />} label="Вырезать" />
            <Item $h={24} icon={<CopyIcon />} label="Копировать" />
            <Item $h={24} $muted icon={<BrushIcon />} label="Формат по образцу" />
          </List>
        </Group>

        <Group w={224} label="Шрифт" pad={7} launcher="on">
          <ToolRows>
            <ToolRow>
              <SelectFrame $w={107}>
                <Select aria-label="Шрифт"><option>Calibri</option></Select>
                <Chevron />
              </SelectFrame>
              <SelectFrame $w={52}>
                <Select $size={11} aria-label="Размер"><option>12пт</option></Select>
                <Chevron />
              </SelectFrame>
              <IconButton aria-label="Увеличить шрифт"><GrowIcon /></IconButton>
              <IconButton aria-label="Уменьшить шрифт"><GrowIcon down /></IconButton>
            </ToolRow>
            <ToolRow>
              <IconButton><b>Ж</b></IconButton>
              <IconButton><i>К</i></IconButton>
              <IconButton><u>Ч</u></IconButton>
              <IconButton $size={12}><s>ab</s></IconButton>
              <IconButton $w={34}>Aa<Chevron /></IconButton>
              <Separator $h={20} $m="0 4px" />
              <IconButton aria-label="Цвет текста"><FontColorIcon /></IconButton>
              <IconButton $w={10} aria-label="Цвета"><Chevron /></IconButton>
            </ToolRow>
          </ToolRows>
        </Group>

        <Group w={164} label="Абзац" pad={7} launcher="on">
          <ToolRows>
            <ToolRow>
              <IconButton aria-label="По верхнему краю"><Lines rows={[[0, 1, 15], [4, 3, 13], [8, 1, 15]]} /></IconButton>
              <IconButton $on aria-label="По середине"><Lines rows={[[3, 1, 15], [7, 3, 13], [11, 1, 15]]} /></IconButton>
              <IconButton aria-label="По нижнему краю"><Lines rows={[[6, 1, 15], [10, 3, 13], [14, 1, 15]]} /></IconButton>
              <Separator $h={20} $m="0 3px" />
              <IconButton aria-label="Маркеры"><BulletIcon /></IconButton>
              <Separator $h={20} $m="0 3px" />
              <IconButton $muted aria-label="Повернуть текст"><RotateTextIcon /></IconButton>
            </ToolRow>
            <ToolRow>
              <IconButton aria-label="По левому краю"><Lines rows={four("left")} /></IconButton>
              <IconButton $on aria-label="По центру"><Lines rows={four("short")} /></IconButton>
              <IconButton aria-label="По правому краю"><Lines rows={four("right")} /></IconButton>
              <IconButton aria-label="По ширине"><Lines rows={four("long")} /></IconButton>
              <Separator $h={20} $m="0 3px" />
              <IconButton aria-label="Уменьшить отступ"><IndentIcon out /></IconButton>
              <IconButton aria-label="Увеличить отступ"><IndentIcon /></IconButton>
            </ToolRow>
          </ToolRows>
        </Group>

        <Group w={210} label="Инструменты" pad={11}>
          <List>
            <Item icon={<PointerIcon />} label="Указатель" />
            <Item icon={<ConnectorIcon />} label="Соединительная линия" />
            <Item icon={<TextIcon />} label="Текст" />
          </List>
          <List $ml={13}>
            <Item aria-label="Прямоугольник" icon={<RectIcon />} menu gap={3} />
            <Item aria-label="Точка соединения" icon={<XIcon s={14} stroke="#333" />} />
            <Item aria-label="Блок текста" icon={<ConnectionPointIcon />} />
          </List>
        </Group>

        <Group w={167} label="Стили фигур" pad={5} launcher="muted">
          <BigButton $w={67} $muted>
            <BigIcon><QuickStylesIcon /></BigIcon>
            Экспресс-
            <SecondLine>стили<Chevron /></SecondLine>
          </BigButton>
          <List>
            <Item icon={<FillIcon />} label="Заливка" menu />
            <Item icon={<LineIcon />} label="Линия" menu />
            <Item $muted icon={<EffectsIcon />} label="Эффекты" menu />
          </List>
        </Group>

        <Group w={296} label="Упорядочение" pad={6}>
          <BigButton $w={68}>
            <BigIcon><AlignIcon /></BigIcon>
            Выровнять
            <SecondLine><Chevron /></SecondLine>
          </BigButton>
          <BigButton $w={68}>
            <BigIcon><PositionIcon /></BigIcon>
            Положение
            <SecondLine><Chevron /></SecondLine>
          </BigButton>
          <List $ml={4}>
            <Item $muted icon={<FrontIcon />} label="На передний план" menu gap={9} />
            <Item $muted icon={<BackIcon />} label="На задний план" menu gap={9} />
            <Item $muted icon={<GroupIcon />} label="Группировать" menu />
          </List>
        </Group>

        <Group w={167} label="Редактирование" pad={3}>
          <BigButton $w={67} $muted>
            <BigIcon><ChangeShapeIcon /></BigIcon>
            Изменить
            <SecondLine>фигуру<Chevron /></SecondLine>
          </BigButton>
          <List>
            <Item icon={<SearchIcon />} label="Поиск" menu />
            <Item icon={<LayersIcon />} label="Слои" menu />
            <Item icon={<PointerIcon />} label="Выделить" menu />
          </List>
        </Group>
        <Spacer />
        <CollapseButton aria-label="Свернуть ленту">
          <Svg w={11} h={7} strokeWidth="1.400"><path d="M.5 6l5-5 5 5" /></Svg>
        </CollapseButton>
      </Ribbon>

      <Workspace>
        <ShapesPane>
          <PaneButton $end aria-label="Развернуть окно фигур">
            <Svg w={8} h={10} strokeWidth="2"><path d="M1.500 1l4.500 4-4.500 4" /></Svg>
          </PaneButton>
          <PaneButton aria-label="Фигуры">
            <Svg w={16} h={17} stroke="#777" strokeWidth="2">
              <path d="M4 14H1V1h10v4M1 7h5M6 1v6M6 5h5" />
              <path d="M4.500 15.500V9h3l1-1.500h5V12" stroke="#e8b566" strokeWidth="1" fill="#fff" />
              <path d="M4 16l2.500-4H16l-2.500 4z" fill="#eebb6b" stroke="none" />
            </Svg>
            <Svg w={5} h={8} stroke="none" fill="#222"><path d="M0 0l5 4-5 4z" /></Svg>
          </PaneButton>
        </ShapesPane>

        <Editor>
          <EditorTop>
            <Sheet>
              <Corner>
                <Svg w={16} h={16} stroke="#c9c9c9"><path d="M8.500 1v14M2 8.500h13" /></Svg>
              </Corner>
              <HRuler>
                {H_MARKS.map((n) => <HMark key={n}><HLabel>{n}</HLabel></HMark>)}
              </HRuler>
              <VRuler>
                {V_MARKS.map((n, i) => (
                  <VCell key={n} $h={i === 0 ? 50 : 58}>
                    <VMark><VLabelBox><VLabel>{n}</VLabel></VLabelBox></VMark>
                  </VCell>
                ))}
              </VRuler>
              <Canvas><Drawing /></Canvas>
            </Sheet>
            <VScroll>
              <ScrollButton aria-label="Вверх"><Triangle dir="up" /></ScrollButton>
              <Track $vertical>
                <Before $part={57} />
                <Thumb $part={658} />
                <Before $part={34} />
              </Track>
              <ScrollButton aria-label="Вниз"><Triangle dir="down" /></ScrollButton>
            </VScroll>
          </EditorTop>
          <HScroll>
            <ScrollButton aria-label="Влево"><Triangle dir="left" /></ScrollButton>
            <Track>
              <Before $part={440} />
              <Thumb $part={503} />
              <Before $part={444} />
            </Track>
            <ScrollButton aria-label="Вправо"><Triangle dir="right" /></ScrollButton>
          </HScroll>
          <PageTabs>
            <PageTab $active>Страница-1</PageTab>
            <Divider $m="0 14px 0 17px" />
            <PageTab>
              Все
              <Svg w={9} h={5} stroke="none" fill={BLUE}><path d="M0 5l4.500-5L9 5z" /></Svg>
            </PageTab>
            <Divider $m="0 10px 0 17px" />
            <PageTab aria-label="Вставить страницу">
              <Svg w={15} stroke={BLUE} strokeWidth="1.200"><circle cx="7.500" cy="7.500" r="6.900" /><path d="M7.500 3.500v8M3.500 7.500h8" /></Svg>
            </PageTab>
          </PageTabs>
        </Editor>
      </Workspace>

      <StatusBar>
        <StatusButton $after={19}>Страница 1 из 1</StatusButton>
        <StatusButton $after={20}>русский</StatusButton>
        <StatusButton aria-label="Макросы">
          <Svg w={15} h={13}>
            <path d="M6 12.500H.5V.500h13V5M.5 3.500h13M3 6.500h3M3 9.500h2" />
            <circle cx="10" cy="8.500" r="4" /><circle cx="10" cy="8.500" r="1.500" fill="#444" />
          </Svg>
        </StatusButton>
        <Spacer />
        <StatusButton $after={18} aria-label="Режим презентации">
          <Svg w={15} h={15} strokeWidth="1.200"><path d="M0 .6h15M1.600 1v8.400h11.800V1M7.500 9.500v5M4 14.400h7" /></Svg>
        </StatusButton>
        <StatusButton aria-label="Уменьшить"><Svg w={9} h={9} strokeWidth="1.200"><path d="M0 4.500h9" /></Svg></StatusButton>
        <Zoom type="range" min="0" max="100" defaultValue="13" aria-label="Масштаб" />
        <StatusButton $after={12} aria-label="Увеличить"><Svg w={9} h={9} strokeWidth="1.200"><path d="M0 4.500h9M4.500 0v9" /></Svg></StatusButton>
        <StatusButton $after={11}>31 %</StatusButton>
        <StatusButton $after={13} aria-label="Вписать страницу">
          <Svg w={15} strokeWidth="1.200"><path d="M4.500 4.500h6v6h-6zM5.500 2.500l2-2 2 2M5.500 12.500l2 2 2-2M2.500 5.500l-2 2 2 2M12.500 5.500l2 2-2 2" /></Svg>
        </StatusButton>
        <StatusButton aria-label="Переключить окна">
          <Svg w={15}><path d="M4 8.500H.5V.500h11V4M.5 2.500h11M7.500 13.500h7v-8h-9v2M6 7.500h8.500M3 9c0 3 1 4 4 4M5 11l2.500 2L5 15" /></Svg>
        </StatusButton>
      </StatusBar>
    </Shell>
  );
}
